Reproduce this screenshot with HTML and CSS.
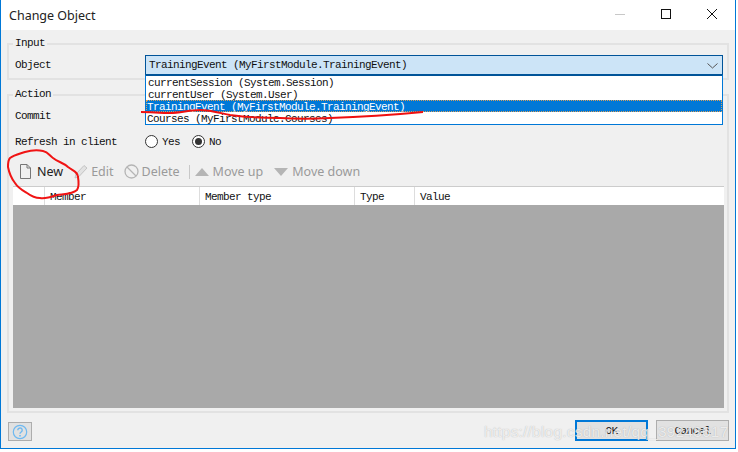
FILE: index.html
```html
<!DOCTYPE html>
<html lang="en">
<head>
<meta charset="utf-8">
<title>Change Object</title>
<link rel="stylesheet" href="styles.css">
</head>
<body>
<div class="window">
  <header class="titlebar">
    <span class="title">Change Object</span>
    <div class="controls">
      <svg class="ctl" width="12" height="12" viewBox="0 0 12 12"><path d="M1 6.500h10" stroke="#c8c8c8" fill="none"/></svg>
      <svg class="ctl" width="12" height="12" viewBox="0 0 12 12"><rect x="1.500" y="1.500" width="9" height="9" stroke="#111" fill="none"/></svg>
      <svg class="ctl" width="12" height="12" viewBox="0 0 12 12"><path d="M1 1l10 10M11 1L1 11" stroke="#111" fill="none"/></svg>
    </div>
  </header>
  <main class="content">
    <section class="group group-input">
      <span class="legend">Input</span>
      <div class="row">
        <span class="label">Object</span>
        <div class="select">
          <span class="select-text">TrainingEvent (MyFirstModule.TrainingEvent)</span>
          <svg width="11" height="6" viewBox="0 0 11 6"><path d="M.5.5l5 4.500 5-4.500" stroke="#555" fill="none"/></svg>
          <ul class="dropdown">
            <li>currentSession (System.Session)</li>
            <li>currentUser (System.User)</li>
            <li class="selected">TrainingEvent (MyFirstModule.TrainingEvent)</li>
            <li class="tight">Courses (MyFirstModule.Courses)</li>
          </ul>
        </div>
      </div>
    </section>
    <section class="group group-action">
      <span class="legend">Action</span>
      <div class="row row-commit"><span class="label">Commit</span></div>
      <div class="row row-refresh">
        <span class="label">Refresh in client</span>
        <span class="radio"></span><span class="radio-text">Yes</span>
        <span class="radio on"></span><span class="radio-text">No</span>
      </div>
      <div class="toolbar">
        <span class="tool active">
          <svg width="13" height="15" viewBox="0 0 13 15"><path d="M1.500.5h6.500l3.500 3.500v10.500h-10zM8 .5v3.500h3.500" fill="none" stroke="#777"/></svg>New
        </span>
        <span class="tool tool-edit">
          <svg width="14" height="15" viewBox="0 0 14 15"><path d="M1 14l1-4 8-8.500 3 2.500-8 8.500z" fill="#e2e2e2" stroke="#c4c4c4"/></svg>Edit
        </span>
        <span class="tool tool-edit tool-delete">
          <svg width="15" height="15" viewBox="0 0 15 15"><circle cx="7.500" cy="7.500" r="6.500" fill="none" stroke="#b5b5b5" stroke-width="1.300"/><path d="M3 3l9 9" stroke="#b5b5b5" stroke-width="1.300"/></svg>Delete
        </span>
        <span class="sep"></span>
        <span class="tool">
          <svg width="14" height="8" viewBox="0 0 14 8"><path d="M7 0l7 8H0z" fill="#b5b5b5"/></svg>Move up
        </span>
        <span class="tool">
          <svg width="14" height="8" viewBox="0 0 14 8"><path d="M7 8l7-8H0z" fill="#b5b5b5"/></svg>Move down
        </span>
      </div>
      <div class="grid">
        <div class="grid-head">
          <span class="col col-0"></span>
          <span class="col col-1">Member</span>
          <span class="col col-2">Member type</span>
          <span class="col col-3">Type</span>
          <span class="col col-4">Value</span>
        </div>
        <div class="grid-body"></div>
      </div>
    </section>
    <footer class="footer">
      <button class="help" type="button">
        <svg width="16" height="16" viewBox="0 0 16 16"><circle cx="8" cy="8" r="6.700" fill="none" stroke="#6fb9f0" stroke-width="1.200"/><path d="M5.800 6.200a2.200 2.200 0 1 1 3.400 1.800c-.8.500-1.200 1-1.200 1.800" fill="none" stroke="#6fb9f0" stroke-width="1.400"/><path d="M7.200 11h1.600v1.600H7.200z" fill="#6fb9f0"/></svg>
      </button>
      <button class="btn primary" type="button">OK</button>
      <button class="btn" type="button">Cancel</button>
    </footer>
  </main>
</div>
<svg class="ink" width="738" height="452" viewBox="0 0 738 452">
  <path d="M25 152C32 150 38 150 43 151C48 152 50 156 53 158C58 162 64 163 68 167C73 171 78 172 78 177C79 183 79 187 77 190C73 194 64 194 57 195C51 197 46 199 40 198C35 198 31 196 27 193C22 190 18 188 15 183C11 178 9 172 8 167C8 163 8 160 10 158C14 155 19 154 25 152Z" fill="none" stroke="#f01414" stroke-width="2"/>
  <path d="M141 112C150 112 160 113 170 113C180 113 190 110 200 110C210 110 220 113 230 115C245 117 262 118 280 118C297 119 313 119 330 118C362 117 392 115 423 112" fill="none" stroke="#ee1010" stroke-width="1.800"/>
</svg>
<span class="watermark">https://blog.csdn.net/qq_39248617</span>
</body>
</html>
```
FILE: styles.css
```css
* { box-sizing: border-box; }
html, body { margin: 0; height: 452px; overflow: hidden; background: #fff; }
body { position: relative; font-family: "Liberation Mono", "DejaVu Sans Mono", monospace; font-size: 11px; letter-spacing: -.6px; color: #111; }
.window { width: 736px; height: 449px; border: 1px solid #0078d7; border-top: 0; display: flex; flex-direction: column; background: #f0f0f0; }
.titlebar { height: 30px; flex: none; background: #fff; display: flex; align-items: center; justify-content: space-between; padding-left: 8px; }
.title { font-family: "Noto Sans", sans-serif; font-size: 12.500px; letter-spacing: 0; color: #222; }
.controls { display: flex; gap: 34px; margin-right: 17px; margin-top: -2px; }
.content { flex: 1; display: flex; flex-direction: column; padding: 13px 6px 0 6px; }
.group { position: relative; border: 2px solid #e2e2e2; }
.legend { position: absolute; left: 4px; top: -8px; background: #f0f0f0; padding: 0 2px; line-height: 12px; }
.group-input { height: 37px; }
.group-action { height: 319px; margin-top: 14px; display: flex; flex-direction: column; }
.row { display: flex; align-items: center; padding-left: 6px; }
.label { width: 130px; flex: none; margin-top: -2px; }
.group-input .row { padding-top: 10px; }
.select { position: relative; width: 578px; height: 21px; display: flex; align-items: center; justify-content: space-between; padding: 0 4px 0 3px; background: #cce4f7; border: 1px solid #005499; }
.select-text { margin-top: -2px; }
.dropdown { position: absolute; z-index: 2; left: -1px; right: -1px; top: 18px; margin: 0; padding: 0; list-style: none; background: #fff; border: 1px solid #0078d7; border-top-width: 2px; border-top-color: #005499; height: 51px; }
.dropdown li { height: 12px; line-height: 14px; padding-left: 2px; white-space: nowrap; }
.dropdown .selected { background: #0078d7; color: #fff; outline: 1px dotted #d9a05b; outline-offset: -1px; padding-left: 1px; }
.dropdown .tight { padding-left: 1px; }
.row-commit { margin-top: 14px; height: 12px; }
.row-commit .label { margin-top: 0; }
.row-refresh { margin-top: 13px; height: 14px; }
.row-refresh .label { margin-top: 0; }
.radio { width: 13px; height: 13px; flex: none; border: 1px solid #333; border-radius: 50%; background: #fff; display: flex; align-items: center; justify-content: center; margin-top: -2px; }
.radio.on::after { content: ""; width: 7px; height: 7px; background: #333; border-radius: 50%; }
.radio-text { width: 34px; padding-left: 4px; }
.radio-text:last-child { width: auto; }
.toolbar { margin-top: 8px; height: 29px; flex: none; padding-left: 10px; display: flex; align-items: center; gap: 11px; font-family: "Noto Sans", sans-serif; font-size: 12.500px; letter-spacing: 0; color: #9a9a9a; }
.tool { display: flex; align-items: center; gap: 4px; }
.tool.active { color: #222; gap: 5px; }
.tool-edit { gap: 3px; }
.tool-delete { margin-left: -1px; }
.sep { width: 1px; height: 14px; background: #c8c8c8; margin: 0 -6px 0 -2px; }
.grid { flex: 1; margin: 0 3px 3px 4px; display: flex; flex-direction: column; }
.grid-head { height: 19px; flex: none; display: flex; background: #fff; border-top: 1px solid #ccc; line-height: 20px; }
.col { flex: none; border-right: 1px solid #ddd; padding-left: 5px; white-space: nowrap; }
.col-0 { width: 32px; }
.col-1 { width: 155px; }
.col-2 { width: 155px; }
.col-3 { width: 60px; }
.col-4 { flex: 1; border-right: 0; }
.grid-body { flex: 1; background: #a9a9a9; }
.footer { display: flex; align-items: center; padding-top: 7px; gap: 8px; }
.help { width: 24px; height: 19px; margin: 2px auto 0 1px; padding: 0; display: flex; align-items: center; justify-content: center; background: #e1e1e1; border: 1px solid #adadad; }
.btn { width: 73px; height: 21px; padding: 0; background: #e1e1e1; border: 1px solid #adadad; font: inherit; letter-spacing: inherit; color: #111; }
.btn.primary { border: 2px solid #0078d7; }
.ink { position: absolute; z-index: 3; left: 0; top: 0; pointer-events: none; }
.watermark { position: absolute; z-index: 4; left: 484px; top: 423px; font-family: "Liberation Sans", sans-serif; font-size: 15.500px; letter-spacing: .2px; color: rgba(255,255,255,.75); white-space: nowrap; text-shadow: 0 0 1px rgba(120,120,120,.55); }
```
